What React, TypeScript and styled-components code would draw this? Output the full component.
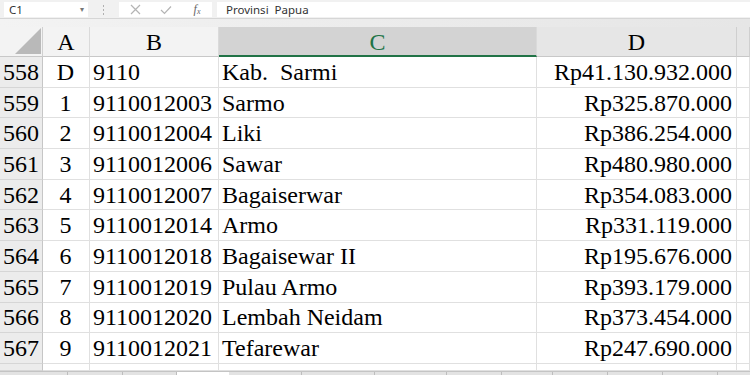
import React from 'react';
import styled, { createGlobalStyle } from 'styled-components';

const GlobalStyle = createGlobalStyle`
  html, body {
    margin: 0;
    padding: 0;
    background: #ffffff;
  }
`;

type Row = { no: number; a: string; b: string; c: string; d: string };

const rows: Row[] = [
  { no: 558, a: 'D', b: '9110', c: 'Kab.  Sarmi', d: 'Rp41.130.932.000' },
  { no: 559, a: '1', b: '9110012003', c: 'Sarmo', d: 'Rp325.870.000' },
  { no: 560, a: '2', b: '9110012004', c: 'Liki', d: 'Rp386.254.000' },
  { no: 561, a: '3', b: '9110012006', c: 'Sawar', d: 'Rp480.980.000' },
  { no: 562, a: '4', b: '9110012007', c: 'Bagaiserwar', d: 'Rp354.083.000' },
  { no: 563, a: '5', b: '9110012014', c: 'Armo', d: 'Rp331.119.000' },
  { no: 564, a: '6', b: '9110012018', c: 'Bagaisewar II', d: 'Rp195.676.000' },
  { no: 565, a: '7', b: '9110012019', c: 'Pulau Armo', d: 'Rp393.179.000' },
  { no: 566, a: '8', b: '9110012020', c: 'Lembah Neidam', d: 'Rp373.454.000' },
  { no: 567, a: '9', b: '9110012021', c: 'Tefarewar', d: 'Rp247.690.000' },
];

const leftTabs = [68, 55, 54];
const rightTabs = [73, 73, 72, 55, 51, 55, 55, 55, 33];

const COLS = '43px 47px 129px 318px 200px 1fr';

function Sheet(): React.ReactElement {
  return (
    <>
      <GlobalStyle />
      <Page>
        <FormulaBar>
          <NameBox>
            C1
            <Caret>▾</Caret>
          </NameBox>
          <Grip>
            <Dot />
            <Dot />
            <Dot />
          </Grip>
          <FxButtons>
            <FxIcon>
              <svg width="11" height="11" viewBox="0 0 11 11">
                <path d="M1 1 L10 10 M10 1 L1 10" stroke="#b4b4b4" strokeWidth="1.2" fill="none" />
              </svg>
            </FxIcon>
            <FxIcon>
              <svg width="12" height="10" viewBox="0 0 12 10">
                <path d="M1 5 L4.5 8.5 L11 1.5" stroke="#b4b4b4" strokeWidth="1.2" fill="none" />
              </svg>
            </FxIcon>
            <FxLabel>
              f<sub>x</sub>
            </FxLabel>
          </FxButtons>
          <FormulaInput>Provinsi  Papua</FormulaInput>
        </FormulaBar>
        <Band />
        <HeaderRow>
          <Corner>
            <svg width="26" height="26" viewBox="0 0 26 26">
              <polygon points="26,0 26,26 0,26" fill="#b9b9b9" />
            </svg>
          </Corner>
          <ColHead>A</ColHead>
          <ColHead>B</ColHead>
          <ColHead $selected>C</ColHead>
          <ColHead $dark>D</ColHead>
          <ColHead $dark />
        </HeaderRow>
        {rows.map((r) => (
          <GridRow key={r.no}>
            <RowHead>{r.no}</RowHead>
            <Cell $align="center">{r.a}</Cell>
            <Cell>{r.b}</Cell>
            <Cell>{r.c}</Cell>
            <Cell $align="right">{r.d}</Cell>
            <Cell />
          </GridRow>
        ))}
        <GridRow $short>
          <RowHead />
          <Cell />
          <Cell />
          <Cell />
          <Cell />
          <Cell />
        </GridRow>
        <TabBar>
          {leftTabs.map((w, i) => (
            <Tab key={'l' + i} style={{ width: w }} />
          ))}
          <TabGap />
          {rightTabs.map((w, i) => (
            <Tab key={'r' + i} style={{ width: w }} />
          ))}
        </TabBar>
      </Page>
    </>
  );
}

export default Sheet;

const Page = styled.div`
  width: 750px;
  height: 375px;
  overflow: hidden;
  display: flex;
  flex-direction: column;
  background: #ffffff;
  font-family: "Liberation Serif", "Times New Roman", serif;
`;

const FormulaBar = styled.div`
  height: 18px;
  flex: none;
  display: flex;
  align-items: stretch;
  box-sizing: border-box;
  padding: 2px 0 1px 4px;
  background: #f1f1f1;
  font-family: "Noto Sans", "Open Sans", sans-serif;
  font-size: 11.5px;
  color: #333333;
`;

const NameBox = styled.div`
  width: 84px;
  background: #ffffff;
  display: flex;
  align-items: center;
  padding-left: 5px;
  box-sizing: border-box;
  position: relative;
`;

const Caret = styled.span`
  position: absolute;
  right: 4px;
  top: 1px;
  font-size: 8px;
  color: #777777;
`;

const Grip = styled.div`
  width: 31px;
  display: flex;
  flex-direction: column;
  align-items: center;
  justify-content: center;
  gap: 2px;
`;

const Dot = styled.span`
  width: 1px;
  height: 2px;
  background: #b0b0b0;
`;

const FxButtons = styled.div`
  width: 93px;
  background: #ffffff;
  display: grid;
  grid-template-columns: 30px 31px 32px;
  align-items: center;
  justify-items: center;
  padding-left: 1px;
  box-sizing: border-box;
`;

const FxIcon = styled.span`
  display: flex;
  align-items: center;
`;

const FxLabel = styled.span`
  font-family: "Liberation Serif", serif;
  font-style: italic;
  font-size: 12px;
  color: #666666;
  line-height: 1;

  sub {
    font-size: 8px;
    vertical-align: -1px;
  }
`;

const FormulaInput = styled.div`
  flex: 1;
  margin-left: 5px;
  background: #ffffff;
  display: flex;
  align-items: center;
  padding-left: 9px;
  white-space: pre;
`;

const Band = styled.div`
  height: 9px;
  flex: none;
  box-sizing: border-box;
  border-top: 1px solid #d6d6d6;
  background: linear-gradient(90deg, #f3f3f3 0%, #ededed 40%, #e6e6e6 100%);
`;

const HeaderRow = styled.div`
  height: 30px;
  flex: none;
  display: grid;
  grid-template-columns: ${COLS};
`;

const Corner = styled.div`
  background: #f3f3f3;
  border-right: 1px solid #d0d0d0;
  border-bottom: 1px solid #c8c8c8;
  display: flex;
  align-items: flex-end;
  justify-content: flex-end;
  padding: 0 1px 2px 0;
  box-sizing: border-box;
`;

const ColHead = styled.div<{ $selected?: boolean; $dark?: boolean }>`
  box-sizing: border-box;
  background: ${(p) => (p.$selected ? '#d3d3d3' : p.$dark ? '#e6e6e6' : '#f3f3f3')};
  color: ${(p) => (p.$selected ? '#217346' : '#000000')};
  border-right: 1px solid ${(p) => (p.$dark ? '#cfcfcf' : '#dadada')};
  border-bottom: ${(p) => (p.$selected ? '2px solid #217346' : '1px solid #c8c8c8')};
  font-size: 24px;
  display: flex;
  align-items: center;
  justify-content: center;
  line-height: 1;
  padding-top: 1px;
`;

const GridRow = styled.div<{ $short?: boolean }>`
  height: ${(p) => (p.$short ? '7px' : '30.7px')};
  flex: none;
  display: grid;
  grid-template-columns: ${COLS};
  font-size: 24px;
  color: #000000;
`;

const RowHead = styled.div`
  box-sizing: border-box;
  background: #ececec;
  border-right: 1px solid #c6c6c6;
  border-bottom: 1px solid #d6d6d6;
  display: flex;
  align-items: center;
  justify-content: center;
  padding-top: 1px;
  overflow: hidden;
`;

const Cell = styled.div<{ $align?: 'left' | 'center' | 'right' }>`
  box-sizing: border-box;
  border-right: 1px solid #e0e0e0;
  border-bottom: 1px solid #e0e0e0;
  display: flex;
  align-items: center;
  justify-content: ${(p) => (p.$align === 'center' ? 'center' : p.$align === 'right' ? 'flex-end' : 'flex-start')};
  padding: 1px 4px 0 3px;
  white-space: pre;
  overflow: hidden;
`;

const TabBar = styled.div`
  flex: 1;
  display: flex;
  box-sizing: border-box;
  border-top: 1px solid #c4c4c4;
`;

const Tab = styled.div`
  flex: none;
  box-sizing: border-box;
  background: #e3e3e3;
  border-right: 1px solid #bdbdbd;
`;

const TabGap = styled.div`
  width: 52px;
  flex: none;
  background: #ffffff;
`;
